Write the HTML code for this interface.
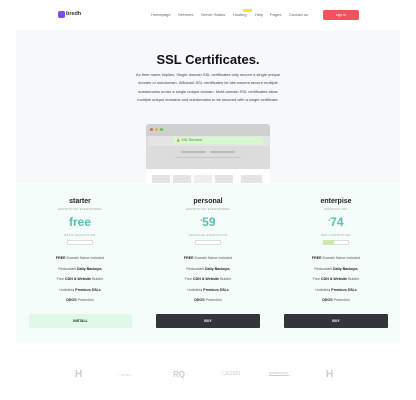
<!DOCTYPE html>
<html><head><style>
*{margin:0;padding:0;box-sizing:border-box}
body{width:416px;height:400px;background:#fff;font-family:"Liberation Sans",sans-serif;position:relative;overflow:hidden;color:#222}
.a{position:absolute}
.nav span{position:absolute;top:12px;font-size:4px;color:#666}
.c{text-align:center}
.t{position:absolute;width:128px;text-align:center}
.f{font-size:3.6px;color:#555}
.f b{color:#222}
</style></head><body>
<div class="a" style="left:58px;top:11px;width:7px;height:7px;background:#7b4fe0;border-radius:2px"></div>
<div class="a" style="left:66px;top:11px;font-size:5.5px;font-weight:bold;color:#333">bredh</div>
<div class="nav">
<span style="left:151px">Homepage</span><span style="left:178px">Services</span><span style="left:201px">Server Status</span><span style="left:233px">Hosting</span><span style="left:255px">Help</span><span style="left:270px">Pages</span><span style="left:289px">Contact us</span>
</div>
<div class="a" style="left:243px;top:9px;width:9px;height:3px;background:#f2e23a;border-radius:1px"></div>
<div class="a c" style="left:323px;top:10px;width:36px;height:10px;background:#f0535c;border-radius:2px;color:#fff;font-size:3.5px;line-height:10px">sign in</div>
<div class="a" style="left:16px;top:30px;width:384px;height:153px;background:#f7f8fa"></div>
<div class="a c" style="left:0;top:52px;width:416px;font-size:13px;font-weight:bold;color:#111">SSL Certificates.</div>
<div class="a c" style="left:134px;top:71px;width:148px;font-size:4px;line-height:8.3px;color:#444">As their name implies, Single domain SSL certificates only secure a single unique domain or subdomain. Wildcard SSL certificates let site owners secure multiple subdomains under a single unique domain. Multi-domain SSL certificates allow multiple unique domains and subdomains to be secured with a single certificate.</div>
<div class="a" style="left:146px;top:124px;width:124px;height:60px;background:#dcdcdc;border-radius:3px 3px 0 0"></div>
<div class="a" style="left:146px;top:124px;width:124px;height:12px;background:#d0d0d0;border-radius:3px 3px 0 0"></div>
<div class="a" style="left:150px;top:128px;width:3px;height:3px;border-radius:50%;background:#e5605a"></div>
<div class="a" style="left:155px;top:128px;width:3px;height:3px;border-radius:50%;background:#e6b33c"></div>
<div class="a" style="left:160px;top:128px;width:3px;height:3px;border-radius:50%;background:#5ec25a"></div>
<div class="a" style="left:148px;top:136px;width:122px;height:10px;background:#e4e4e4"></div>
<div class="a" style="left:173px;top:137px;width:90px;height:7px;background:#d7f7cf;font-size:3.5px;line-height:7px;color:#4a8a3a;padding-left:3px">🔒 SSL Secured</div>
<div class="a" style="left:181px;top:151px;width:25px;height:1.5px;background:#bbb"></div>
<div class="a" style="left:210px;top:151px;width:25px;height:1.5px;background:#bbb"></div>
<div class="a" style="left:175px;top:157px;width:66px;height:1px;background:#c8c8c8"></div>
<div class="a" style="left:146px;top:169px;width:124px;height:15px;background:#fff"></div>
<div class="a" style="left:152px;top:175px;width:18px;height:8px;background:#e4e4e4"></div>
<div class="a" style="left:173px;top:175px;width:18px;height:8px;background:#e4e4e4"></div>
<div class="a" style="left:194px;top:175px;width:18px;height:8px;background:#eee"></div>
<div class="a" style="left:215px;top:175px;width:18px;height:8px;background:#e4e4e4"></div>
<div class="a" style="left:241px;top:175px;width:21px;height:8px;background:#e4e4e4"></div>
<div class="a" style="left:16px;top:184px;width:384px;height:159px;background:#f4fdf9"></div>

<div class="t" style="left:16px;top:198px;font-size:7px;font-weight:bold">starter</div>
<div class="t" style="left:144px;top:198px;font-size:7px;font-weight:bold">personal</div>
<div class="t" style="left:272px;top:198px;font-size:7px;font-weight:bold">enterpise</div>
<div class="t" style="left:16px;top:208px;font-size:2.5px;color:#999;letter-spacing:.4px">ENCRYPTION EVERYWHERE</div>
<div class="t" style="left:144px;top:208px;font-size:2.5px;color:#999;letter-spacing:.4px">ENCRYPTION EVERYWHERE</div>
<div class="t" style="left:272px;top:208px;font-size:2.5px;color:#999;letter-spacing:.4px">PERSONAL SSL</div>
<div class="t" style="left:16px;top:215px;font-size:12px;font-weight:bold;color:#5bbcb0">free</div>
<div class="t" style="left:144px;top:215px;font-size:12px;font-weight:bold;color:#5bbcb0"><sup style="font-size:3px;color:#999">$</sup>59</div>
<div class="t" style="left:272px;top:215px;font-size:12px;font-weight:bold;color:#5bbcb0"><sup style="font-size:3px;color:#999">$</sup>74</div>
<div class="t" style="left:16px;top:234px;font-size:2.5px;color:#999;letter-spacing:.4px">BASIC ENCRYPTION</div>
<div class="t" style="left:144px;top:234px;font-size:2.5px;color:#999;letter-spacing:.4px">ADVANCED ENCRYPTION</div>
<div class="t" style="left:272px;top:234px;font-size:2.5px;color:#999;letter-spacing:.4px">BEST ENCRYPTION</div>
<div class="a" style="left:67px;top:240px;width:26px;height:5px;border:0.5px solid #ddd;background:#fff"></div>
<div class="a" style="left:195px;top:240px;width:26px;height:5px;border:0.5px solid #ddd;background:#fff"></div>
<div class="a" style="left:323px;top:240px;width:26px;height:5px;border:0.5px solid #ddd;background:#fff"></div>
<div class="a" style="left:323px;top:240px;width:11px;height:5px;background:#cfe8b0"></div>

<div class="t f" style="left:16px;top:253px;line-height:10.6px"><b>FREE</b> Domain Name Included<br>Redundant <b>Daily Backups</b><br>Free <b>CDN &amp; Website</b> Builder<br>Unlimited <b>Premium SSLs</b><br><b>DDOS</b> Protection</div>
<div class="t f" style="left:144px;top:253px;line-height:10.6px"><b>FREE</b> Domain Name Included<br>Redundant <b>Daily Backups</b><br>Free <b>CDN &amp; Website</b> Builder<br>Unlimited <b>Premium SSLs</b><br><b>DDOS</b> Protection</div>
<div class="t f" style="left:272px;top:253px;line-height:10.6px"><b>FREE</b> Domain Name Included<br>Redundant <b>Daily Backups</b><br>Free <b>CDN &amp; Website</b> Builder<br>Unlimited <b>Premium SSLs</b><br><b>DDOS</b> Protection</div>

<div class="a c" style="left:29px;top:314px;width:103px;height:14px;background:#dff8ec;font-size:3.5px;font-weight:bold;line-height:14px">INSTALL</div>
<div class="a c" style="left:156px;top:314px;width:104px;height:14px;background:#333639;color:#fff;font-size:3.5px;font-weight:bold;line-height:14px;border-radius:1px">BUY</div>
<div class="a c" style="left:284px;top:314px;width:104px;height:14px;background:#333639;color:#fff;font-size:3.5px;font-weight:bold;line-height:14px;border-radius:1px">BUY</div>
<div class="a" style="left:75px;top:369px;font-size:10px;color:#ccc;font-weight:bold">H</div>
<div class="a" style="left:118px;top:373px;font-size:3px;color:#ccc">~ HOTEL ~</div>
<div class="a" style="left:173px;top:370px;font-size:8px;color:#ccc;font-weight:bold">RQ</div>
<div class="a" style="left:222px;top:371px;font-size:5px;color:#ccc">CASSIS</div>
<div class="a" style="left:269px;top:371px;font-size:3px;color:#bbb;border-bottom:0.5px solid #ccc">ROSEMOUNT</div>
<div class="a" style="left:326px;top:369px;font-size:10px;color:#ccc;font-weight:bold">H</div>
</body></html>
